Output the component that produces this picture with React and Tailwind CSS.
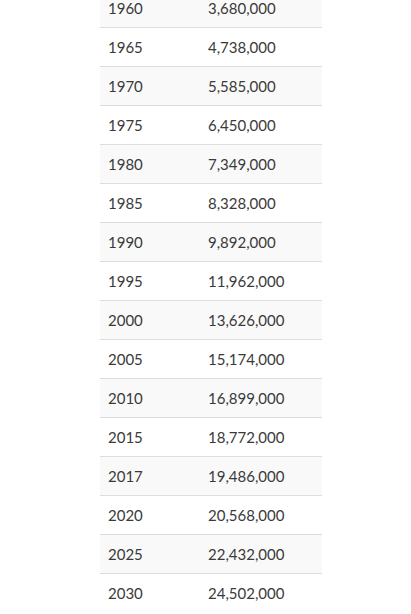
const rows = [
  ["1960", "3,680,000"],
  ["1965", "4,738,000"],
  ["1970", "5,585,000"],
  ["1975", "6,450,000"],
  ["1980", "7,349,000"],
  ["1985", "8,328,000"],
  ["1990", "9,892,000"],
  ["1995", "11,962,000"],
  ["2000", "13,626,000"],
  ["2005", "15,174,000"],
  ["2010", "16,899,000"],
  ["2015", "18,772,000"],
  ["2017", "19,486,000"],
  ["2020", "20,568,000"],
  ["2025", "22,432,000"],
  ["2030", "24,502,000"],
];

export default function App() {
  return (
    <div className="w-[411px] h-[614px] overflow-hidden bg-white" style={{ fontFamily: "Lato, 'Open Sans', sans-serif" }}>
      <div className="ml-[100px] mt-[-11px] w-[222px] flex flex-col">
        {rows.map(([y, v], i) => (
          <div
            key={y}
            className={`flex h-[39px] items-center text-[15px] text-[#3a3a3a] ${i % 2 === 0 ? "bg-[#f9f9f9]" : "bg-white"} ${i < rows.length - 1 ? "border-b border-[#dddddd]" : ""}`}
          >
            <div className="w-[108px] pl-[8px]">{y}</div>
            <div>{v}</div>
          </div>
        ))}
      </div>
    </div>
  );
}
